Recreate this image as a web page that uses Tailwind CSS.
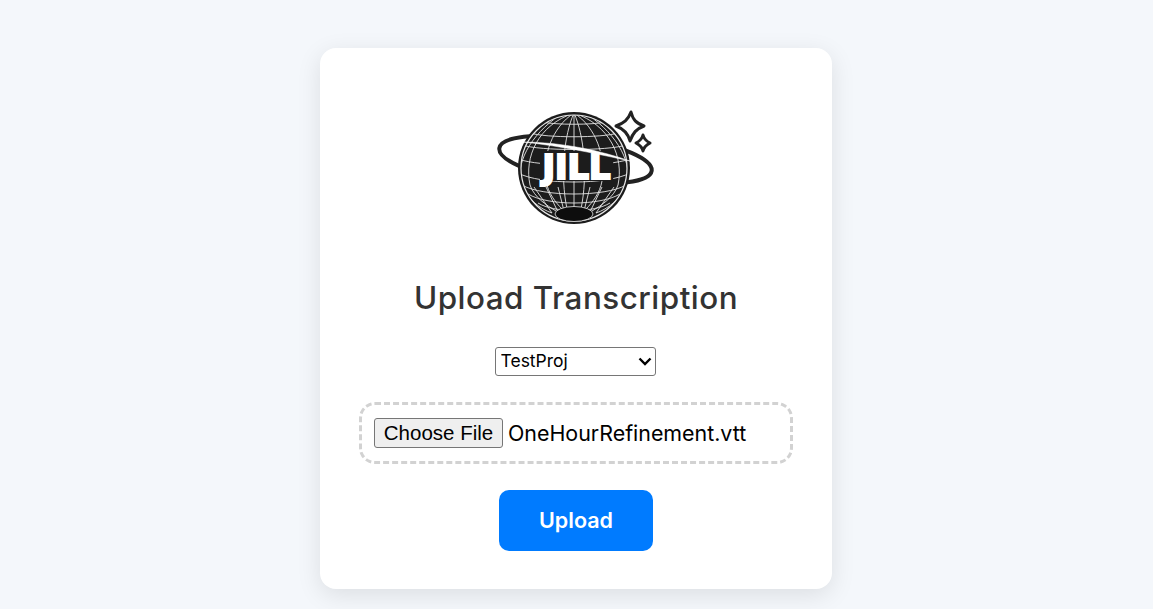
<!DOCTYPE html>
<html lang="en">
<head>
    <meta charset="UTF-8">
    <meta name="viewport" content="width=device-width, initial-scale=1.0">
    <title>Upload Transcription</title>
    <script src="https://cdn.jsdelivr.net/npm/@tailwindcss/browser@4"></script>
</head>
<body class="bg-[#f4f7fb] min-h-screen font-['Inter',sans-serif] overflow-hidden pr-px">
    <div class="flex justify-center pt-12">
        <div class="w-[512px] h-[541px] bg-white rounded-2xl shadow-[0_6px_24px_rgba(0,0,0,0.1)] flex flex-col items-center pt-[47px]">

            <!-- Logo -->
            <svg class="w-[190px] h-[140px] block" viewBox="1 0 190 140" fill="none">
                <defs>
                    <clipPath id="globe"><circle cx="94" cy="73" r="53"/></clipPath>
                </defs>
                <ellipse cx="95.5" cy="64.5" rx="77" ry="21" transform="rotate(8.5 95.5 64.5)" stroke="#222" stroke-width="4"/>
                <circle cx="94" cy="73" r="56" fill="#1c1c1c"/>
                <circle cx="94" cy="73" r="53" fill="#1c1c1c" stroke="#e8e8e8" stroke-width="1.2"/>
                <g clip-path="url(#globe)" stroke="#e4e4e4" stroke-width="0.9">
                    <!-- meridians, running down to the pole -->
                    <path d="M94 18V112"/>
                    <path d="M94 18C84 40 80 80 87 114"/>
                    <path d="M94 18C104 40 108 80 101 114"/>
                    <path d="M94 18C72 32 62 62 66 86C68 98 76 108 82 114"/>
                    <path d="M94 18C116 32 126 62 122 86C120 98 112 108 106 114"/>
                    <path d="M94 18C58 30 44 62 50 90C54 102 66 110 76 116"/>
                    <path d="M94 18C130 30 144 62 138 90C134 102 122 110 112 116"/>
                    <path d="M80 20C50 40 34 70 42 92C48 104 60 114 72 118"/>
                    <path d="M108 20C138 40 154 70 146 92C140 104 128 114 116 118"/>
                    <!-- latitudes -->
                    <path d="M62 27C76 30 112 30 126 27"/>
                    <path d="M50 38C66 43 122 43 138 38"/>
                    <path d="M42 50C60 56 128 56 146 50"/>
                    <path d="M38 64C60 72 128 72 150 64"/>
                    <path d="M38 78C60 90 128 90 150 78"/>
                    <path d="M42 90C62 102 126 102 146 90"/>
                    <path d="M48 99C68 111 120 111 140 99"/>
                    <path d="M58 108C74 118 114 118 130 108"/>
                    <!-- fan round the pole -->
                    <path d="M66 92L78 117"/>
                    <path d="M78 92L84 116"/>
                    <path d="M110 92L104 116"/>
                    <path d="M122 92L110 117"/>
                    <path d="M54 92L72 118"/>
                    <path d="M134 92L116 118"/>
                </g>
                <ellipse cx="94" cy="119" rx="19" ry="7.5" fill="#0d0d0d" stroke="#e8e8e8" stroke-width="0.8"/>
                <rect x="60" y="56" width="73" height="30" fill="#1c1c1c"/>
                <path d="M43 47C82 47 122 56 150 66C122 60 82 51 43 47Z" fill="#fff" stroke="#fff" stroke-width="0.5"/>
                <text x="96.5" y="84" text-anchor="middle" textLength="68" lengthAdjust="spacingAndGlyphs" font-family="DejaVu Sans" font-weight="700" font-size="33" fill="#fff" stroke="#fff" stroke-width="2.2">JILL</text>
                <path d="M151 17C153 25 156 28 164 31C156 34 153 38 150 46C148 38 144 34 136 31C144 28 148 25 151 17Z" stroke="#222" stroke-width="3" stroke-linejoin="round" fill="#fff"/>
                <path d="M163 40C164 44 166 46 170 48C166 50 164 52 163 56C162 52 160 50 156 48C160 46 162 44 163 40Z" stroke="#222" stroke-width="3" stroke-linejoin="round" fill="#fff"/>
            </svg>

            <h1 class="mt-[40px] text-[#333] text-[31.4px] leading-[46px] font-medium tracking-[0.5px]">Upload Transcription</h1>

            <div class="relative mt-[26px] mr-[2px]">
                <select class="block appearance-none w-[161px] h-[29px] bg-white text-black text-[17.5px] pl-[5px] border border-[#767676] rounded-[3px]">
                    <option>TestProj</option>
                </select>
                <svg class="absolute right-[4px] top-[10px] w-[14px] h-[9px] pointer-events-none" viewBox="0 0 14 9" fill="none">
                    <path d="M1.5 1.5L7 7L12.5 1.5" stroke="#000" stroke-width="2.4"/>
                </svg>
            </div>

            <div class="mt-[26px] w-[434px] h-[62px] border-[3px] border-dashed border-[#d2d2d2] rounded-2xl flex items-center pl-[12px] gap-[5px]">
                <button class="w-[129px] h-[30px] bg-[#efefef] border border-[#767676] rounded-[3px] text-black text-[20.5px] leading-none font-['Liberation_Sans',sans-serif]">Choose File</button>
                <span class="text-black text-[21.4px]">OneHourRefinement.vtt</span>
            </div>

            <button class="mt-[26px] w-[154px] h-[61px] bg-[#007bff] text-white text-[21.5px] font-semibold rounded-[10px]">Upload</button>
        </div>
    </div>
</body>
</html>
